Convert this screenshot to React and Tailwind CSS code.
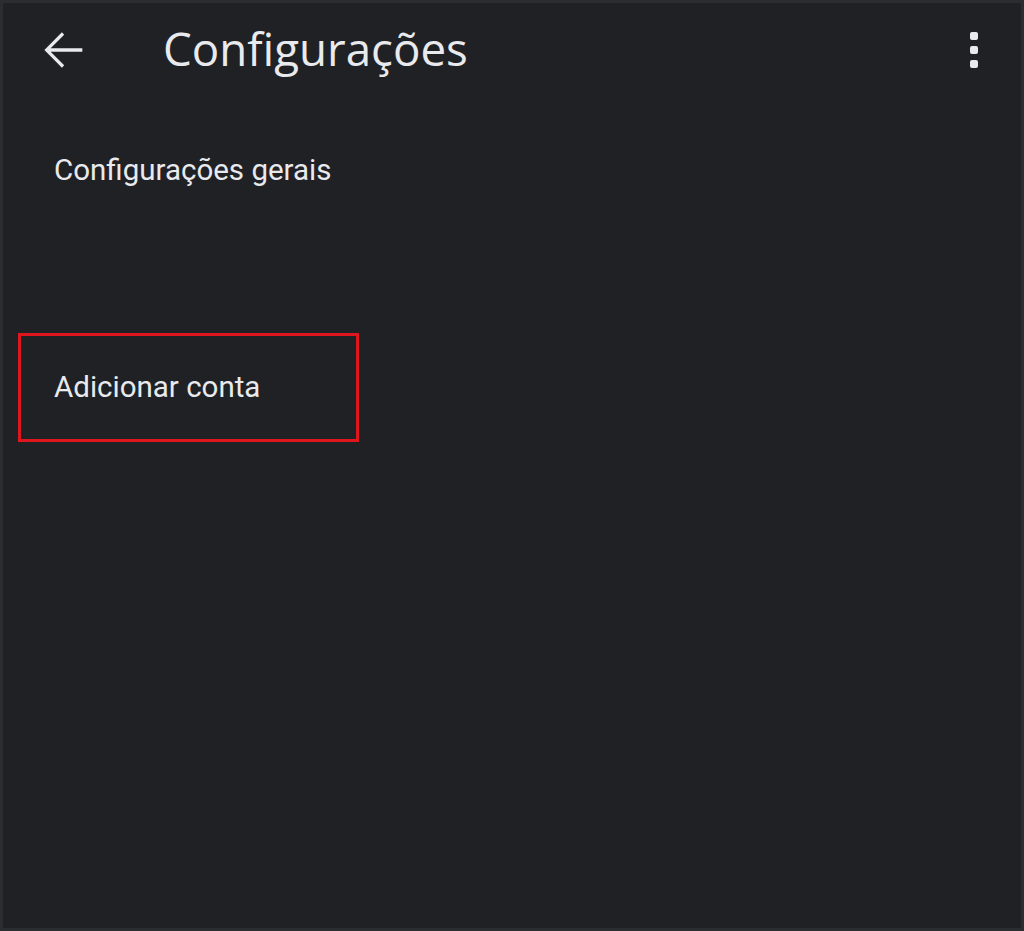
import React from "react";

const BackArrow = () => (
  <svg width="58" height="58" viewBox="0 0 24 24" fill="#e8eaed">
    <path d="M20 11.25H6.9l5.6-5.6-.95-.95L4.3 12l7.25 7.3.95-.95-5.6-5.6H20z" />
  </svg>
);

const MoreIcon = () => (
  <svg width="10" height="38" viewBox="0 0 10 38" fill="#e8eaed">
    <rect x="1" y="1" width="8" height="8" rx="2" />
    <rect x="1" y="15" width="8" height="8" rx="2" />
    <rect x="1" y="29" width="8" height="8" rx="2" />
  </svg>
);

export default function App() {
  return (
    <div className="w-[1024px] h-[931px] bg-[#2c2d31] p-[3px] overflow-hidden" style={{ fontFamily: "Roboto, 'Noto Sans', sans-serif" }}>
      <div className="w-full h-full bg-[#202125] flex flex-col">
        {/* Top bar */}
        <div className="flex items-center h-[94px] pl-[31px] pr-[42px]">
          <BackArrow />
          <h1 className="ml-[71px] text-[45.7px] text-[#e8eaed] font-normal leading-none pb-[2px]" style={{ fontFamily: "'Open Sans', Roboto, sans-serif" }}>
            Configurações
          </h1>
          <div className="ml-auto flex">
            <MoreIcon />
          </div>
        </div>

        {/* List */}
        <div className="pl-[51px] pt-[55px] text-[29.5px] leading-[36px] text-[#e8eaed]">
          Configurações gerais
        </div>

        <div className="mt-[145px] ml-[15px] w-[341px] h-[109px] border-[3px] border-[#e0161e] flex items-center pl-[33px]">
          <span className="text-[29.5px] text-[#e8eaed]">Adicionar conta</span>
        </div>
      </div>
    </div>
  );
}
